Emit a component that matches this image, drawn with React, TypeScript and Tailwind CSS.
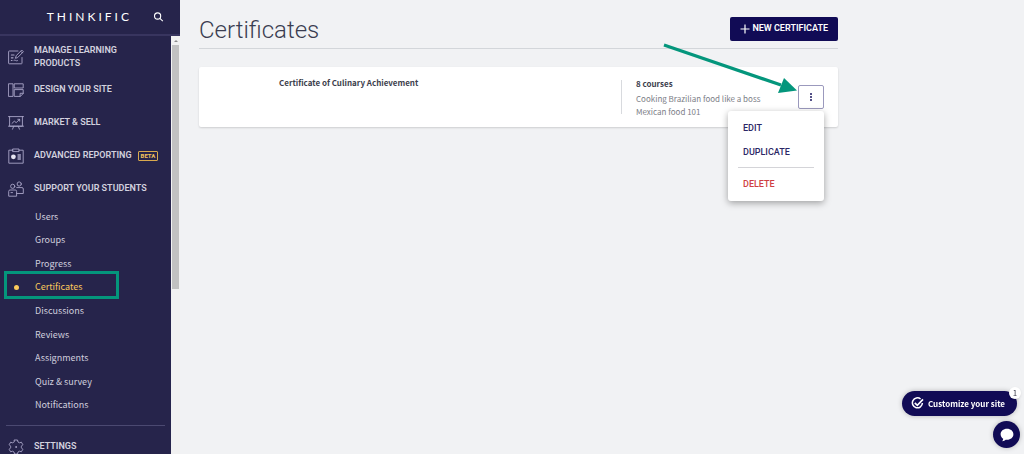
import type { ReactNode } from "react";

const heading = "font-['Roboto',sans-serif]";
const body = "font-['Noto_Sans_CJK_SC','Open_Sans',sans-serif]";

function Icon({ children }: { children: ReactNode }) {
  return (
    <svg
      viewBox="0 0 16 16"
      className="size-4 shrink-0"
      fill="none"
      stroke="#aaa6c8"
      strokeWidth="0.9"
      strokeLinecap="round"
      strokeLinejoin="round"
      aria-hidden
    >
      {children}
    </svg>
  );
}

const sections = [
  {
    label: "MANAGE LEARNING PRODUCTS",
    icon: (
      <Icon>
        <path d="M10 2H1.2Q.6 2 .6 2.6V14.2Q.6 14.8 1.2 14.8H13.4Q14 14.8 14 14.2V8.5M14 1.3 15.4 2.7 9.6 8.6 7.4 9.3 8.1 7.1ZM12.9 2.4 14.3 3.8M6 11.3C7.5 10.3 7.5 12.5 9.5 11.7" />
        <path d="M3.4 6H6M3.4 8.8H5M3.4 11.5H4" strokeWidth="1.2" />
      </Icon>
    ),
  },
  {
    label: "DESIGN YOUR SITE",
    icon: (
      <Icon>
        <path d="M.8 1.8H5V14.4H.8ZM6.6 1.8H15.2V6H6.6ZM6.6 7.6H15.2V11.5L12.3 14.4H6.6ZM15.2 11.3H12.1V14.4" />
      </Icon>
    ),
  },
  {
    label: "MARKET & SELL",
    icon: (
      <Icon>
        <path d="M.5 1.6H15.5M1.6 1.6V11.2H14.4V1.6M5.8 11.2 4.5 14.2M10.2 11.2 11.5 14.2M.5 11.2H15.5M4 8.4 6.3 6.2 8.2 7.6 11.6 4.4M9.8 4.3H11.7V6.2" />
      </Icon>
    ),
  },
  {
    label: "ADVANCED REPORTING",
    beta: true,
    icon: (
      <Icon>
        <path d="M5 2.2H.8V15.2H15.2V2.2H11M5 1H11V3.6H5Z" />
        <circle cx="5.4" cy="8.8" r="2.4" fill="#e7e5f2" stroke="none" />
        <path d="M10 7H12.4M10 9H12.4M10 11H12.4" strokeWidth="1.3" />
      </Icon>
    ),
  },
  {
    label: "SUPPORT YOUR STUDENTS",
    icon: (
      <Icon>
        <circle cx="4.7" cy="5.3" r="2.1" />
        <circle cx="11.2" cy="3" r="2.1" />
        <path d="M.7 14.8V10.3Q.7 9 2 9H7.3Q8.6 9 8.6 10.3V14.8ZM8.7 6.6H14Q15.3 6.6 15.3 8V12.5H8.8M3 11.6H4.5" />
      </Icon>
    ),
  },
];

const studentLinks = [
  "Users",
  "Groups",
  "Progress",
  "Certificates",
  "Discussions",
  "Reviews",
  "Assignments",
  "Quiz & survey",
  "Notifications",
];

function Sidebar() {
  return (
    <aside className="flex h-full w-[180px] shrink-0 flex-col bg-[#26244b]">
      <header className="flex h-9 shrink-0 items-center justify-end gap-5 border-b-2 border-[#38355f] pr-4">
        <a href="#" className="font-['Lato',sans-serif] text-xs tracking-[3px] text-white">
          THINKIFIC
        </a>
        <button type="button" aria-label="Search">
          <svg viewBox="0 0 12 12" className="size-3" fill="none" stroke="#fff" strokeWidth="1.1">
            <circle cx="5.6" cy="5" r="3.1" />
            <path d="M7.9 7.3 10.8 10.2" />
          </svg>
        </button>
      </header>
      <div className="flex min-h-0 flex-1">
        <nav className="min-w-0 flex-1 overflow-hidden pt-1">
          {sections.map((section) => (
            <a
              key={section.label}
              href="#"
              className={`flex h-[33px] items-center gap-[10px] px-2 text-[9px] leading-[13px] font-semibold text-[#d2d1de] ${heading}`}
            >
              {section.icon}
              <span className={section.beta ? "whitespace-nowrap" : "max-w-[120px]"}>
                {section.label}
              </span>
              {section.beta && (
                <span className="-ml-1 rounded-[1px] border border-[#d9a94e] px-[2px] text-[6px] leading-2 font-bold text-[#f3c25c]">
                  BETA
                </span>
              )}
            </a>
          ))}
          <ul className={`grid h-[212px] grid-rows-9 text-[9px] leading-4 text-[#cfcedd] ${body}`}>
            {studentLinks.map((label) =>
              label === "Certificates" ? (
                <li key={label} className="relative flex items-center pl-[35px] text-[#fbc95b]">
                  <span className="absolute left-[14px] size-[5px] rounded-full bg-[#fbc95b]" />
                  <a href="#" aria-current="page">
                    {label}
                  </a>
                  <span className="absolute -top-[5px] left-1 h-7 w-[115px] border-[3px] border-[#04967c]" />
                </li>
              ) : (
                <li key={label} className="flex items-center pl-[35px]">
                  <a href="#">{label}</a>
                </li>
              ),
            )}
          </ul>
          <hr className="mx-[6px] mt-2 mb-1 border-[#4b4971]" />
          <a
            href="#"
            className={`flex h-[33px] items-center gap-[10px] px-2 text-[9px] leading-[13px] font-semibold text-[#d2d1de] ${heading}`}
          >
            <Icon>
              <path d="M6.5 1h3l.5 2 1.4.8 2-.6 1.4 2.5-1.4 1.5v1.6l1.4 1.5-1.4 2.5-2-.6-1.4.8-.5 2h-3L6 13l-1.4-.8-2 .6-1.4-2.5 1.4-1.5V7.2L1.2 5.7 2.6 3.2l2 .6L6 3Z" />
              <circle cx="8" cy="8" r=".5" />
            </Icon>
            SETTINGS
          </a>
        </nav>
        {/* Scroll track */}
        <div className="w-[9px] shrink-0 bg-[#f1f1f1] pl-px" aria-hidden>
          <div className="flex h-[9px] items-center justify-center">
            <svg viewBox="0 0 4 2" className="h-[2px] w-1" fill="#8a8a8a">
              <path d="M0 2 2 0 4 2Z" />
            </svg>
          </div>
          <div className="h-[244px] w-[7px] bg-[#c1c1c1]" />
        </div>
      </div>
    </aside>
  );
}

function ActionsMenu() {
  return (
    <div className="relative">
      <button
        type="button"
        aria-label="Certificate actions"
        className="flex h-6 w-[26px] items-center justify-center rounded-[2px] border border-[#9b99bd] bg-white"
      >
        <svg viewBox="0 0 4 10" className="h-[10px] w-1" fill="#1c1760">
          <circle cx="2" cy="2" r="1" />
          <circle cx="2" cy="5" r="1" />
          <circle cx="2" cy="8" r="1" />
        </svg>
      </button>
      <div
        className={`absolute top-[26px] right-0 z-10 flex w-24 flex-col rounded-[3px] bg-white px-[10px] pt-[6px] pb-1 text-left text-[9px] font-medium text-[#2b2665] shadow-[0_2px_7px_rgba(0,0,0,0.35)] ${heading}`}
      >
        <button type="button" className="h-6 px-[5px] text-left">
          EDIT
        </button>
        <button type="button" className="h-6 px-[5px] text-left">
          DUPLICATE
        </button>
        <hr className="mt-[2px] mb-[5px] border-[#d4d4d8]" />
        <button type="button" className="h-6 px-[5px] text-left text-[#cf3e42]">
          DELETE
        </button>
      </div>
      {/* Arrow pointing at the menu button */}
      <svg
        viewBox="0 0 136 54"
        className="pointer-events-none absolute right-[25px] bottom-[14px] z-20 h-[54px] w-[136px] max-w-none"
        aria-hidden
      >
        <path d="M1 4 118 44" stroke="#04967c" strokeWidth="3.2" />
        <path d="M121 37 134 49.5 115 52Z" fill="#04967c" />
      </svg>
    </div>
  );
}

export default function App() {
  return (
    <div className={`flex h-screen overflow-hidden bg-[#f1f2f4] text-[#3c3e4c] ${body}`}>
      <Sidebar />
      <main className="min-w-0 flex-1 px-[19px]">
        <div className="max-w-[639px]">
          <header className="flex h-[49px] items-end justify-between border-b border-[#d3d6da] pb-[7px]">
            <h1 className={`-mb-[3px] text-2xl leading-7 font-light text-[#3a3d50] ${heading}`}>
              Certificates
            </h1>
            <button
              type="button"
              className={`flex h-6 items-center gap-[2px] rounded-[2px] bg-[#110b55] px-[10px] text-[9px] font-semibold whitespace-nowrap text-white ${heading}`}
            >
              <svg viewBox="0 0 10 10" className="size-[10px]" stroke="#fff" strokeWidth="1.2">
                <path d="M5 .5V9.5M.5 5H9.5" />
              </svg>
              NEW CERTIFICATE
            </button>
          </header>

          <article className="mt-[18px] flex h-[60px] items-center rounded-[2px] bg-white pr-[14px] pl-20 shadow-[0_1px_2px_rgba(0,0,0,0.15)]">
            <h2 className="flex-1 self-start pt-2 text-[8px] leading-4 font-bold">
              Certificate of Culinary Achievement
            </h2>
            <div className="flex h-[34px] w-[177px] items-center border-l border-[#d8dade] pl-[14px]">
              <div className="whitespace-nowrap">
                <h3 className="text-[8px] leading-4 font-bold">8 courses</h3>
                <ul className="text-[8px] leading-[13px] text-[#7c7e87]">
                  <li>Cooking Brazilian food like a boss</li>
                  <li>Mexican food 101</li>
                </ul>
              </div>
            </div>
            <ActionsMenu />
          </article>
        </div>
      </main>

      <div className="fixed right-[7px] bottom-[38px]">
        <button
          type="button"
          className="flex h-[25px] items-center gap-1 rounded-full bg-[#110b55] pr-3 pl-[9px] text-[8px] font-bold whitespace-nowrap text-white shadow-[0_0_5px_rgba(0,0,0,0.25)]"
        >
          <svg viewBox="0 0 13 13" className="size-[13px]" fill="none" stroke="#fff" strokeWidth="1.5">
            <path d="M9.6 2A5 5 0 1 0 11.4 6" />
            <path d="M3.8 5.8 6.3 8.3 12 2.4" strokeWidth="1.7" />
          </svg>
          Customize your site
        </button>
        <span className="absolute -top-1 -right-1 flex size-3 items-center justify-center rounded-full bg-white text-[8px] shadow-sm">
          1
        </span>
      </div>
      <button
        type="button"
        aria-label="Open chat"
        className="fixed right-1 bottom-[6px] flex size-[27px] items-center justify-center rounded-full bg-[#110b55] shadow-[0_0_5px_rgba(0,0,0,0.25)]"
      >
        <svg viewBox="0 0 14 14" className="size-[14px]" fill="#fff">
          <path d="M7 .8C3.3.8.6 3.2.6 6.3c0 1.900 1 3.500 2.600 4.500 0 .9-.4 1.700-1 2.400 1.500-.1 2.700-.6 3.500-1.500.4.1.9.1 1.300.1 3.700 0 6.400-2.400 6.400-5.500S10.700.8 7 .8Z" />
        </svg>
      </button>
    </div>
  );
}
